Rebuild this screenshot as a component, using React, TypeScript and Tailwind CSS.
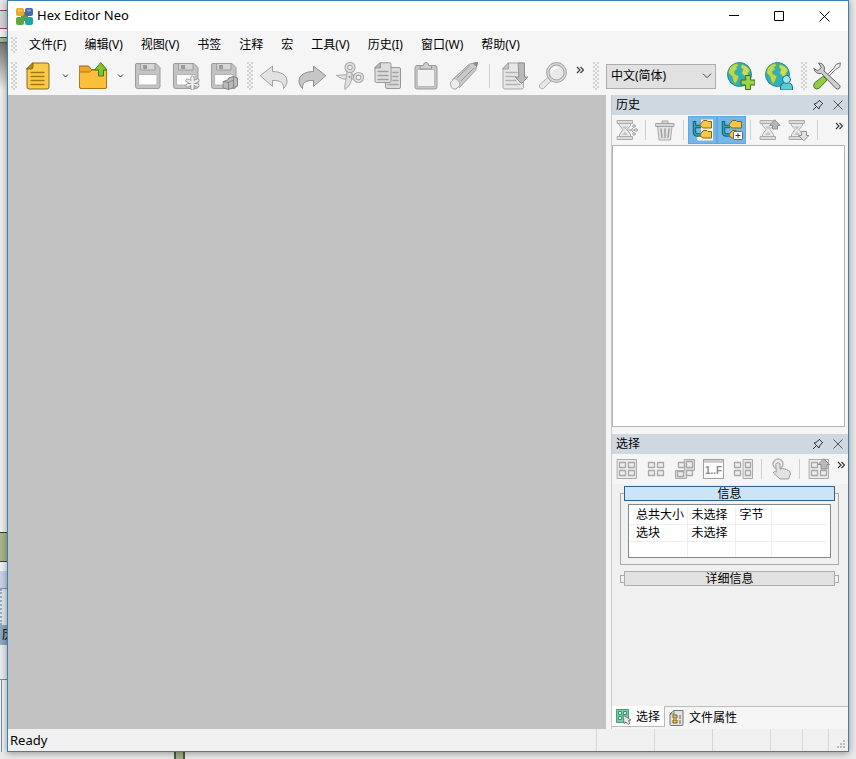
import React from 'react';

type IconProps = { children: React.ReactNode; size?: string };

// 28x28 drawing used by the main toolbar, 22x22 by the panel toolbars
function Icon({ children, size = 'size-7' }: IconProps) {
  return (
    <svg viewBox="0 0 28 28" className={size} fill="none" strokeLinejoin="round" strokeLinecap="round" aria-hidden="true">
      {children}
    </svg>
  );
}

function PanelIcon({ children }: { children: React.ReactNode }) {
  return (
    <svg viewBox="0 0 22 22" className="size-[22px] shrink-0" fill="none" strokeLinejoin="round" strokeLinecap="round" aria-hidden="true">
      {children}
    </svg>
  );
}

function ToolButton({ label, children }: { label: string; children: React.ReactNode }) {
  return (
    <button type="button" aria-label={label} className="flex h-9 w-[38px] shrink-0 items-center justify-center hover:bg-sky-100">
      {children}
    </button>
  );
}

function PanelButton({ label, active, children }: { label: string; active?: boolean; children: React.ReactNode }) {
  return (
    <button
      type="button"
      aria-label={label}
      className={`flex h-7 w-[29px] shrink-0 items-center justify-center ${active ? 'border border-[#5fa8e0] bg-[#74b6ea]' : ''}`}
    >
      {children}
    </button>
  );
}

function DropArrow({ label }: { label: string }) {
  return (
    <button type="button" aria-label={label} className="flex h-9 w-[17px] shrink-0 items-center justify-center">
      <svg viewBox="0 0 7 4" className="h-1 w-[7px]" fill="none" stroke="#333" aria-hidden="true">
        <path d="M1 .5 3.5 3 6 .5" />
      </svg>
    </button>
  );
}

function More() {
  return (
    <button type="button" aria-label="更多" className="flex size-4 shrink-0 items-center justify-center">
      <svg viewBox="0 0 8 8" className="size-2" fill="none" stroke="#333" strokeWidth="1.1" aria-hidden="true">
        <path d="M1 1l3 3-3 3M4.5 1l3 3-3 3" />
      </svg>
    </button>
  );
}

function Grip({ tall }: { tall?: boolean }) {
  const rows = tall ? [0, 4, 8, 12, 16, 20, 24] : [0, 4, 8, 12];
  return (
    <svg viewBox={tall ? '0 0 7 28' : '0 0 7 16'} className={tall ? 'h-7 w-[7px] shrink-0' : 'h-4 w-[7px] shrink-0'} fill="#d2d2d2" aria-hidden="true">
      {rows.map((y) => (
        <g key={y}>
          <rect x="0" y={y} width="2" height="2" />
          <rect x="4" y={y} width="2" height="2" />
          <rect x="2" y={y + 2} width="2" height="2" />
        </g>
      ))}
    </svg>
  );
}

function Separator() {
  return <span className="mx-1 h-5 w-px shrink-0 bg-[#cfcfcf]" />;
}

function Floppy() {
  return (
    <>
      <path d="M2.500 1.500H22L26 5.500V24.500a2 2 0 0 1-2 2H3.500a2 2 0 0 1-2-2V2.500z" fill="#c3c3c3" stroke="#9c9c9c" />
      <path d="M7 1.500h14v6.500H7z" fill="#d6d6d6" stroke="#9c9c9c" />
      <path d="M9 3h4v4H9z" fill="#999" />
      <path d="M5 12.500h18V23H5z" fill="#fcfcfc" stroke="#b5b5b5" />
    </>
  );
}

function Globe() {
  return (
    <>
      <circle cx="12.500" cy="12.500" r="12" fill="#2bb0c4" stroke="#2489a0" />
      <path d="M2.500 6.500C4.500 3 8 1.500 10.500 1.500l1 2-2 1.500 1 2-3 2.500.5 2.500 4 2-1.500 4.500-2.500 4-2-4-1-4-3.500-3.500z" fill="#bcd84f" stroke="#6aa545" strokeWidth=".7" />
      <path d="M14.500 2.300c3.500.6 7 2.700 8.500 6.200l-2 3 .5 4-2.500 2-2.500-4.500-2-2 1.500-3.500-2-2z" fill="#c8de57" stroke="#6aa545" strokeWidth=".7" />
    </>
  );
}

function Hourglass() {
  return (
    <>
      <path d="M3.500 4.500h11v2L11 10.500l3.500 5v2h-11v-2L7 10.500l-3.500-4z" fill="#e8e8e8" stroke="#ababab" />
      <path d="M1.500 1.500h15v3h-15zM1.500 17.500h15v3h-15z" fill="#dadada" stroke="#ababab" />
      <path d="M6 7.500h6L9.500 10h-1zM9 12.500l3 3.500H6z" fill="#c4c4c4" />
    </>
  );
}

const squares = { fill: '#ededed', stroke: '#a8a8a8', strokeWidth: 1.3 };

function Trunk() {
  return (
    <>
      <path d="M2.500 2v11q0 3 3 3H9M3 7.500h6" stroke="#15646f" strokeWidth="3.400" strokeLinecap="butt" />
      <path d="M2.500 3v10q0 3 3 3H9M3 7.500h6" stroke="#2fa5b0" strokeWidth="1.400" strokeLinecap="butt" />
    </>
  );
}

const menus = ['文件(F)', '编辑(V)', '视图(V)', '书签', '注释', '宏', '工具(V)', '历史(I)', '窗口(W)', '帮助(V)'];

function TitleBar() {
  return (
    <header className="flex h-[30px] shrink-0 items-center bg-white pl-2">
      <svg viewBox="0 0 17 17" className="size-[17px]" aria-hidden="true">
        <path d="M5 4h7v9H5z" fill="#6d9440" />
        <rect x="0" y="0" width="8" height="8" rx="2" fill="#eda923" />
        <rect x="9" y="0" width="8" height="8" rx="2" fill="#4468b0" />
        <rect x="0" y="9" width="8" height="8" rx="2" fill="#5aa83f" />
        <rect x="9" y="9" width="8" height="8" rx="2" fill="#1ba99b" />
        <path d="M2 1.500h4v2H2zM11 1.500h4v2h-4z" fill="#fff" fillOpacity=".35" />
      </svg>
      <h1 className="ml-1 grow text-[13px]">Hex Editor Neo</h1>
      <button type="button" aria-label="最小化" className="flex h-full w-[45px] items-center justify-center">
        <svg viewBox="0 0 10 10" className="size-[10px]" stroke="#000" aria-hidden="true"><path d="M0 4.500h10" /></svg>
      </button>
      <button type="button" aria-label="最大化" className="flex h-full w-[45px] items-center justify-center">
        <svg viewBox="0 0 10 10" className="size-[10px]" fill="none" stroke="#000" aria-hidden="true"><path d="M.5.5h9v9h-9z" /></svg>
      </button>
      <button type="button" aria-label="关闭" className="flex h-full w-[47px] items-center justify-center">
        <svg viewBox="0 0 11 11" className="size-[11px]" stroke="#000" aria-hidden="true"><path d="m.5.5 10 10m0-10-10 10" /></svg>
      </button>
    </header>
  );
}

function MainToolbar() {
  return (
    <div className="flex h-[37px] shrink-0 items-center overflow-hidden pb-px pl-[3px]">
      <Grip tall />
      <span className="w-px" />
      <ToolButton label="新建">
        <Icon>
          <path d="M9 1h14q2 0 2 2v22q0 2-2 2H5q-2 0-2-2V7z" fill="#f9cb48" stroke="#8a6814" />
          <path d="M9 1v4q0 2-2 2H3z" fill="#b08c2c" stroke="#8a6814" />
          <path d="M7 10.500h13M7 14.500h13M7 18.500h13M7 22.500h13" stroke="#a47818" strokeWidth="1.300" />
        </Icon>
      </ToolButton>
      <DropArrow label="新建选项" />
      <ToolButton label="打开">
        <Icon>
          <path d="M.5 4h9l3 3.500h15V25q0 1.500-1.500 1.500H2Q.5 26.500.5 25z" fill="#f0a725" stroke="#946516" />
          <path d="M.5 10h10l2.500-2h14.500V25q0 1.500-1.500 1.500H2Q.5 26.500.5 25z" fill="#fcbf3c" stroke="#ad7515" />
          <path d="M22 .8 28 8h-3.500v6h-5V8H16z" fill="#82c42c" stroke="#3f7c16" />
        </Icon>
      </ToolButton>
      <DropArrow label="打开选项" />
      <ToolButton label="保存"><Icon><Floppy /></Icon></ToolButton>
      <ToolButton label="另存为">
        <Icon>
          <Floppy />
          <path d="M20.500 15.500v11M15.500 18.500l10 5M25.500 18.500l-10 5" stroke="#969696" strokeWidth="4" />
          <path d="M20.500 15.500v11M15.500 18.500l10 5M25.500 18.500l-10 5" stroke="#efefef" strokeWidth="2.400" />
        </Icon>
      </ToolButton>
      <ToolButton label="全部保存">
        <Icon>
          <Floppy />
          <path d="m13.500 19.500 5-2v-1.500l5-1.500 4 1.500v8l-4 1.500-5 2-5-1.500z" fill="#bababa" stroke="#868686" />
          <path d="m13.500 19.500 5 1 5-2.500v-3M18.500 20.500v7M23.500 18v7" stroke="#868686" />
        </Icon>
      </ToolButton>
      <span className="w-1" />
      <Grip tall />
      <span className="w-px" />
      <ToolButton label="撤销">
        <Icon><path d="M.5 13.500 12.500 4v5.500c8 0 14.500 3.500 14.500 9.500 0 3-1.500 5.500-3.500 7.500.5-5-2.500-8.500-11-8v5.500z" fill="#e2e2e2" stroke="#a2a2a2" /></Icon>
      </ToolButton>
      <ToolButton label="重做">
        <Icon><path d="M27.500 13.500 15.500 4v5.500C7.500 9.500 1 13 1 19c0 3 1.500 5.500 3.500 7.500-.5-5 2.500-8.500 11-8v5.500z" fill="#c6c6c6" stroke="#8c8c8c" /></Icon>
      </ToolButton>
      <ToolButton label="剪切">
        <Icon>
          <path d="M.8 13.500 10 12.500l7.500.5v4l-5.500.5Q5 17.500.8 13.500z" fill="#dedede" stroke="#aaa" />
          <path d="m11.500 9.500 4.500 1.500-.5 7q-.5 5-6.500 9.500-1-3 .5-7.500z" fill="#dedede" stroke="#aaa" />
          <circle cx="14" cy="5.500" r="3.700" stroke="#a2a2a2" strokeWidth="3.800" />
          <circle cx="14" cy="5.500" r="3.700" stroke="#dedede" strokeWidth="2" />
          <circle cx="22.500" cy="15.500" r="3.700" stroke="#a2a2a2" strokeWidth="3.800" />
          <circle cx="22.500" cy="15.500" r="3.700" stroke="#dedede" strokeWidth="2" />
          <circle cx="13.500" cy="15" r="1" fill="#999" />
        </Icon>
      </ToolButton>
      <ToolButton label="复制">
        <Icon>
          <path d="M15 5.500h10q1.500 0 1.500 1.500v18q0 1.500-1.500 1.500H13q-1.500 0-1.500-1.500V9z" fill="#dadada" stroke="#979797" />
          <path d="M19 10.500h5M19 14.500h5M19 18.500h5M14 22.500h10" stroke="#a5a5a5" strokeWidth="1.300" />
          <path d="M6.500.8h9Q17 .8 17 2.300V19q0 1.500-1.500 1.500H2.500Q1 20.500 1 19V6z" fill="#dedede" stroke="#979797" />
          <path d="M6.500.8V6H1z" fill="#b9b9b9" stroke="#979797" />
          <path d="M4 9.500h10M4 13.500h10M4 17.500h10" stroke="#a0a0a0" strokeWidth="1.300" />
        </Icon>
      </ToolButton>
      <ToolButton label="粘贴">
        <Icon>
          <rect x="3" y="3.500" width="22" height="23.500" rx="2" fill="#c6c6c6" stroke="#9c9c9c" />
          <path d="M5.500 7.500h17v17h-17z" fill="#f1f1f1" stroke="#b8b8b8" />
          <path d="M8.500 3.500h3q0-3 2.500-3t2.500 3h3v3.500h-11z" fill="#cfcfcf" stroke="#979797" />
        </Icon>
      </ToolButton>
      <ToolButton label="编辑">
        <Icon>
          <path d="m2.500 17.500 17-15.500 8-1.500-2 8L9.500 25.500z" fill="#c9c9c9" stroke="#a2a2a2" />
          <path d="m7.500 15.500 12-11.500M11 19l12.500-12.500" stroke="#989898" />
          <path d="m.5 20.500 3.500-4c3 0 5.500 3 6 6.500l-4 4q-2.500.8-4.500-1.500-1.500-2.500-1-5z" fill="#ececec" stroke="#a8a8a8" />
          <path d="m24 1.200 3.500-.7-.9 3.700z" fill="#888" stroke="#888" />
        </Icon>
      </ToolButton>
      <span className="mx-1.5 h-6 w-px shrink-0 bg-[#cfcfcf]" />
      <ToolButton label="转到">
        <Icon>
          <path d="M7.500 1h15v24q0 2-2 2H4q-2 0-2-2V7z" fill="#e6e6e6" stroke="#a8a8a8" />
          <path d="M7.500 1v6H2z" fill="#c6c6c6" stroke="#a2a2a2" />
          <path d="M5 10.500h11M5 14.500h9M5 18.500h10M5 22.500h14" stroke="#b3b3b3" strokeWidth="1.400" />
          <path d="M17.500 1h6v14H27l-6.500 6.500L14 15h3.500z" fill="#b9b9b9" stroke="#919191" />
        </Icon>
      </ToolButton>
      <ToolButton label="查找">
        <Icon>
          <path d="m9 16 3 3-7.500 7.500q-2 .8-3.500-.7t-.5-3z" fill="#e5e5e5" stroke="#b0b0b0" />
          <circle cx="17.500" cy="10.500" r="8.700" fill="#e9e9e9" stroke="#a2a2a2" strokeWidth="3.400" />
          <circle cx="17.500" cy="10.500" r="8.700" stroke="#dadada" strokeWidth="1.500" />
          <path d="M12.500 9.500q1-4 5-4" stroke="#fff" strokeWidth="2" />
        </Icon>
      </ToolButton>
      <span className="h-7 w-[19px] shrink-0"><More /></span>
      <span className="w-0.5" />
      <Grip tall />
      <div className="mx-[6px] grid shrink-0 items-center">
        <select
          aria-label="语言"
          className="col-start-1 row-start-1 h-[25px] w-[110px] appearance-none border border-[#adadad] bg-[#e1e1e1] pl-1 text-xs"
        >
          <option>中文(简体)</option>
        </select>
        <svg viewBox="0 0 10 6" className="pointer-events-none col-start-1 row-start-1 mr-1 h-[6px] w-[10px] justify-self-end" fill="none" stroke="#444" aria-hidden="true">
          <path d="m1 .7 4 4 4-4" />
        </svg>
      </div>
      <ToolButton label="添加语言">
        <Icon>
          <Globe />
          <path d="M18.500 13.500h5v4.500H28v5h-4.500v4.500h-5V23H14v-5h4.500z" fill="#9bd246" stroke="#35701d" />
        </Icon>
      </ToolButton>
      <ToolButton label="翻译者">
        <Icon>
          <Globe />
          <path d="M15.500 27.500V25q0-3.500 4-4.500h4q4 1 4 4.500v2.500z" fill="#5ccbd6" stroke="#176e80" />
          <circle cx="21.500" cy="17.500" r="4" fill="#9fe3ea" stroke="#176e80" />
        </Icon>
      </ToolButton>
      <span className="w-[3px]" />
      <Grip tall />
      <ToolButton label="设置">
        <Icon>
          <path d="m27 1-4 1.500-2 3.500-8.500 8.500 1.500 1.500L22.500 7.500 26.500 5z" fill="#efefef" stroke="#777" />
          <path d="m10.500 14.500 3.500 3.500-7.500 8q-3 2-5 0t0-5z" fill="#93cb45" stroke="#4b7c25" />
          <path d="M6 1q4.500 0 5.500 5l-.5 3L26.500 23q1.500 2-.3 3.500-2 1.300-3.500-.2L8.500 11.500Q2.500 12.500.8 6.500l4 2.300L8 6z" fill="#cdcdcd" stroke="#666" />
        </Icon>
      </ToolButton>
    </div>
  );
}

function PanelHeader({ title }: { title: string }) {
  return (
    <div className="flex h-5 shrink-0 items-center bg-[#cfd8e0] pl-1 text-xs">
      <h2 className="grow">{title}</h2>
      <button type="button" aria-label="固定" className="flex h-5 w-5 items-center justify-center">
        <svg viewBox="0 0 12 12" className="size-3" fill="none" stroke="#333" aria-hidden="true">
          <path d="m7 1 4 4M7.500 1.500 4 4.500l-2 .5 5 5 .5-2 3-3.500M4.500 7.500l-3.500 3.500" />
        </svg>
      </button>
      <button type="button" aria-label="关闭面板" className="flex h-5 w-5 items-center justify-center">
        <svg viewBox="0 0 10 10" className="size-[10px]" stroke="#555" aria-hidden="true"><path d="m.5.5 9 9m0-9-9 9" /></svg>
      </button>
    </div>
  );
}

function HistoryPanel() {
  return (
    <section className="flex grow flex-col">
      <PanelHeader title="历史" />
      <div className="flex h-[30px] shrink-0 items-center overflow-hidden bg-[#f5f5f5]">
        <PanelButton label="分支">
          <PanelIcon>
            <Hourglass />
            <path d="M11 11h4l3-3M15 11h5M15 11l3 3" stroke="#a5a5a5" />
            <circle cx="18" cy="7" r="1.300" fill="#e5e5e5" stroke="#a5a5a5" />
            <circle cx="20" cy="11" r="1.300" fill="#e5e5e5" stroke="#a5a5a5" />
            <circle cx="18" cy="15" r="1.300" fill="#e5e5e5" stroke="#a5a5a5" />
          </PanelIcon>
        </PanelButton>
        <Separator />
        <PanelButton label="删除">
          <PanelIcon>
            <path d="M4 7.500h14l-1.500 13.500h-11z" fill="#e2e2e2" stroke="#aaa" />
            <path d="M2 4.500h18v3H2zM8 4.500V2h6v2.500" fill="#d8d8d8" stroke="#a2a2a2" />
            <path d="m7 10 1 8.500M11 10v8.500M15 10l-1 8.500" stroke="#a2a2a2" strokeWidth="1.500" />
          </PanelIcon>
        </PanelButton>
        <Separator />
        <PanelButton label="树形视图" active>
          <PanelIcon>
            <path d="M9 .5h12v21H5V17h4z" fill="#fff6d8" />
            <Trunk />
            <path d="m8.500 5 3-3.500h3.500l1 1h3.500v6.500H11L8.500 7zM8.500 15l3-3.500h3.500l1 1h3.500V19H11l-2.500-2z" fill="#f9c746" stroke="#84641d" />
          </PanelIcon>
        </PanelButton>
        <PanelButton label="自动展开" active>
          <PanelIcon>
            <Trunk />
            <path d="m8.500 5 3-3.500h3.500l1 1h4.500v6.500H11L8.500 7zM8.500 15l3-3.500h3.500l1 1h2V19h-7l-2.500-2z" fill="#f9c746" stroke="#84641d" />
            <rect x="12.500" y="12.500" width="9" height="8" rx="1" fill="#fff" stroke="#666" />
            <path d="M15 16.500h4M17 14.500v4" stroke="#333" />
          </PanelIcon>
        </PanelButton>
        <Separator />
        <PanelButton label="载入历史">
          <PanelIcon><Hourglass /><path d="m16 1 5 5.500h-2.500V10h-5V6.500H11z" fill="#b5b5b5" stroke="#939393" /></PanelIcon>
        </PanelButton>
        <PanelButton label="保存历史">
          <PanelIcon><Hourglass /><path d="m16 21.500 5-5h-2.500v-4h-5v4H11z" fill="#e2e2e2" stroke="#939393" /></PanelIcon>
        </PanelButton>
        <Separator />
        <span className="mr-px ml-auto h-6"><More /></span>
      </div>
      <div className="mr-[3px] mb-0.5 grow border border-[#b5b5b5] bg-white" />
    </section>
  );
}

function SelectionToolbar() {
  return (
    <div className="flex h-[30px] shrink-0 items-center overflow-hidden bg-[#f5f5f5]">
      <PanelButton label="全选">
        <PanelIcon>
          <path d="M1.500 1.500h19v19h-19z" fill="#ececec" stroke="#aaa" />
          <path d="M3.500 4.500h6v5h-6zM12.500 4.500h6v5h-6zM3.500 12.500h6v5h-6zM12.500 12.500h6v5h-6z" {...squares} />
        </PanelIcon>
      </PanelButton>
      <PanelButton label="取消选择">
        <PanelIcon><path d="M3.500 4.500h6v5h-6zM12.500 4.500h6v5h-6zM3.500 12.500h6v5h-6zM12.500 12.500h6v5h-6z" {...squares} /></PanelIcon>
      </PanelButton>
      <PanelButton label="反选">
        <PanelIcon>
          <path d="M10.500 1.500h10v11h-8v8h-11v-8h9z" fill="#dedede" stroke="#aaa" />
          <path d="M4.500 4.500h6v5h-6zM12.500 3.500h6v6h-6zM3.500 13.500h6v5h-6zM12.500 12.500h6v5h-6z" {...squares} />
        </PanelIcon>
      </PanelButton>
      <PanelButton label="选择范围">
        <span className="flex h-5 w-[21px] flex-col border border-[#a2a2a2] bg-white">
          <span className="h-[3px] bg-[#cecece]" />
          <span className="grow text-center font-['Liberation_Sans',sans-serif] text-[10px] leading-[15px] font-bold text-[#8b8b8b]">1..F</span>
        </span>
      </PanelButton>
      <PanelButton label="选择列">
        <PanelIcon>
          <path d="M11.500 1.500h9v19h-9z" fill="#e8e8e8" stroke="#aaa" />
          <path d="M2.500 4.500h6v5h-6zM2.500 12.500h6v5h-6zM13.500 4.500h5v5h-5zM13.500 12.500h5v5h-5z" {...squares} />
        </PanelIcon>
      </PanelButton>
      <Separator />
      <PanelButton label="手动选择">
        <PanelIcon>
          <circle cx="8" cy="6" r="5" fill="#ececec" stroke="#b3b3b3" strokeWidth="1.500" />
          <path d="M6 6q2-3 4 0v5l2.500-.5 2 .5 2 .5 2 1q2 1 2 3.500L18.500 21H10l-6.500-6q0-2.500 2.500-1z" fill="#e2e2e2" stroke="#9f9f9f" />
        </PanelIcon>
      </PanelButton>
      <Separator />
      <PanelButton label="载入选择">
        <PanelIcon>
          <path d="M1.500 1.500h19v19h-19z" fill="#ececec" stroke="#aaa" />
          <path d="M3.500 4.500h6v5h-6zM3.500 12.500h6v5h-6zM12.500 12.500h6v5h-6z" {...squares} />
          <path d="m16 1 5.500 5.500H19V11h-6V6.500h-2.500z" fill="#b9b9b9" stroke="#8c8c8c" />
        </PanelIcon>
      </PanelButton>
      <span className="mr-px ml-auto h-6"><More /></span>
    </div>
  );
}

const rows = [
  ['总共大小', '未选择', '字节', ''],
  ['选块', '未选择', '', ''],
  ['', '', '', ''],
];

function SelectionPanel() {
  return (
    <section className="flex h-[295px] shrink-0 flex-col">
      <PanelHeader title="选择" />
      <SelectionToolbar />
      <div className="flex grow flex-col border-b border-[#bdbdbd] bg-[#f0f0f0] pt-0.5 pr-[9px] pl-2 text-xs">
        <div className="grid">
          <div className="col-start-1 row-start-1 mt-[7px] border border-[#a9a9a9]" />
          <div className="col-start-1 row-start-1 flex flex-col px-1">
            <button type="button" aria-expanded="true" className="z-10 h-[15px] overflow-hidden border border-[#31608c] bg-[#cce4f7] leading-[13px]">
              信息
            </button>
            <div className="mx-1 mt-[3px] mb-[7px] h-[54px] overflow-hidden border border-[#828790] bg-white pt-0.5 pr-1">
              <table className="w-full table-fixed border-collapse">
                <colgroup>
                  <col className="w-[58px]" />
                  <col className="w-12" />
                  <col className="w-9" />
                  <col />
                </colgroup>
                <tbody>
                  {rows.map((row, i) => (
                    <tr key={i} className="h-[17px]">
                      {row.map((cell, j) => (
                        <td
                          key={j}
                          className={`p-0 leading-4 whitespace-nowrap ${j === 0 ? 'pl-[7px]' : 'pl-1'} ${j < 3 ? 'border-r border-[#eeeeee]' : ''} ${i < 2 ? 'border-b border-[#eeeeee]' : ''}`}
                        >
                          {cell}
                        </td>
                      ))}
                    </tr>
                  ))}
                </tbody>
              </table>
            </div>
          </div>
        </div>
        <div className="mt-[6px] flex items-center">
          <span className="h-2 w-1 border border-r-0 border-[#a9a9a9]" />
          <button type="button" aria-expanded="false" className="h-[15px] grow overflow-hidden border border-[#adadad] bg-[#e1e1e1] leading-[13px]">
            详细信息
          </button>
          <span className="h-2 w-1 border border-l-0 border-[#a9a9a9]" />
        </div>
      </div>
      <div role="tablist" className="flex h-[22px] shrink-0 items-stretch bg-[#f5f5f5] text-xs">
        <button type="button" role="tab" aria-selected="true" className="-mt-px mb-0.5 flex w-[53px] items-center gap-1 border-r border-b border-[#b9b9b9] bg-white pt-0.5 pl-1">
          <svg viewBox="0 0 16 16" className="size-4 shrink-0" fill="none" aria-hidden="true">
            <path d="M.5.5h12v13H.5z" fill="#79cba7" stroke="#459f7b" />
            <path d="M2.500 2.500h3v3h-3zM7.500 2.500h3v3h-3zM2.500 7.500h3v3h-3z" fill="#d6f2e4" stroke="#36966f" />
            <path d="m7 6 1 8.500 2-1.500 2 2.500 2-1.500-1.500-2.500 2.500-.5z" fill="#e5e5e5" stroke="#777" />
          </svg>
          选择
        </button>
        <button type="button" role="tab" aria-selected="false" className="flex items-center gap-1 pl-1">
          <svg viewBox="0 0 16 16" className="size-4 shrink-0" fill="none" aria-hidden="true">
            <path d="M5 .5h9v14q0 1-1 1H2q-1 0-1-1V4z" fill="#e2e2e2" stroke="#777" />
            <path d="M5 .5V4H1" stroke="#777" />
            <path d="M4 5h4v3H4zM4 10h4v3H4z" fill="#f3c843" stroke="#796018" />
            <path d="M10 6h2M10 8h2M10 11h2M10 13h2" stroke="#666" />
          </svg>
          文件属性
        </button>
      </div>
    </section>
  );
}

function StatusBar() {
  return (
    <footer className="flex h-[22px] shrink-0 bg-[#f0f0f0] text-[13px]">
      <span className="grow pl-0.5 leading-[22px]">Ready</span>
      <span className="w-[58px] border-l border-[#d7d7d7]" />
      <span className="w-[58px] border-l border-[#d7d7d7]" />
      <span className="w-[58px] border-l border-[#d7d7d7]" />
      <span className="w-8 border-l border-[#d7d7d7]" />
      <span className="w-[26px] border-l border-[#d7d7d7]" />
      <span className="flex w-5 items-end justify-end border-l border-[#d7d7d7] pr-0.5 pb-0.5">
        <svg viewBox="0 0 9 9" className="size-[9px]" fill="#bcbcbc" aria-hidden="true">
          <path d="M6 0h2v2H6zM3 3h2v2H3zM6 3h2v2H6zM0 6h2v2H0zM3 6h2v2H3zM6 6h2v2H6z" />
        </svg>
      </span>
    </footer>
  );
}

// Edge of the window lying behind, visible along the left side
function BackdropEdge() {
  return (
    <div className="flex w-[7px] shrink-0 flex-col overflow-hidden bg-[#f3f3f3]">
      <div className="h-[11px] border-b border-[#8e4a5b] bg-[#e3e3e8]" />
      <div className="h-[18px] border-b border-[#8e4a5b] bg-[#d3d3d7]" />
      <div className="h-2 bg-[#f2f2f2]" />
      <div className="h-1.5 border-y border-[#465546] bg-[#9fb597]" />
      <div className="h-12 bg-linear-to-b from-[#777] to-[#f1f1f1]" />
      <div className="grow bg-[#efefef]" />
      <div className="h-[30px] border-y border-[#39422e] bg-[#a9b689]" />
      <div className="h-[9px] bg-[#eef2f8]" />
      <div className="h-[18px] border-b border-[#8b93a5] bg-[#c8d1e8]" />
      <div className="h-[36px] border-l-2 border-dotted border-[#9ba7b8] bg-[#dfe6ee]" />
      <div className="h-5 bg-[#8ea7c0] pl-0.5 text-xs leading-5 whitespace-nowrap">历</div>
      <div className="h-[35px] border-b border-[#7d8ba0] bg-[#e8ebef]" />
      <div className="ml-px h-[72px] border-l border-[#7d8ba0] bg-[#eef3f8]" />
    </div>
  );
}

export default function App() {
  return (
    <div className="flex h-screen min-h-[600px] flex-col overflow-hidden bg-[#e9e9e9] font-['Noto_Sans','Noto_Sans_CJK_SC',sans-serif] text-black">
      <div className="flex min-h-0 grow">
        <BackdropEdge />
        <div className="z-10 flex min-w-0 grow flex-col border border-[#3c7fb1] bg-[#f5f5f5] shadow-[0_1px_7px_rgba(0,0,0,0.4)]">
          <TitleBar />
          <nav aria-label="主菜单" className="flex h-[27px] shrink-0 items-center gap-[18px] pl-[3px] text-xs whitespace-nowrap">
            <Grip />
            {menus.map((name, i) => (
              <button key={name} type="button" className={i === 0 ? '-ml-[7px]' : ''}>{name}</button>
            ))}
          </nav>
          <MainToolbar />
          <main className="flex min-h-0 grow">
            <div className="grow bg-[#c2c2c2]" />
            <aside className="ml-[5px] flex w-[237px] shrink-0 flex-col gap-[5px] border-l border-[#c9c9c9]">
              <HistoryPanel />
              <SelectionPanel />
            </aside>
          </main>
          <StatusBar />
        </div>
        <div className="w-[7px] shrink-0" />
      </div>
      <div className="flex h-[7px] shrink-0 pl-[174px]">
        <div className="w-[11px] border-x-2 border-[#4f584b] bg-[#a5b08c]" />
      </div>
    </div>
  );
}
